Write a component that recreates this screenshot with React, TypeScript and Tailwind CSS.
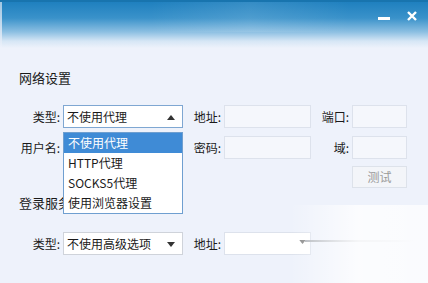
import React from "react";

const Label = ({ w, children }: { w: string; children: React.ReactNode }) => (
  <div className={`${w} shrink-0 text-right pr-[3px] text-[12px] leading-[23px] text-[#1a1a1a]`}>{children}</div>
);

const Input = ({ w }: { w: string }) => (
  <div className={`${w} h-[23px] shrink-0 border border-[#dde2ec] bg-[#f5f7fc]`} />
);

export default function App() {
  return (
    <div
      className="relative w-[428px] h-[283px] overflow-hidden bg-[#eef2fb]"
      style={{ fontFamily: '"Noto Sans CJK SC", "Noto Sans", sans-serif' }}
    >
      {/* title bar */}
      <div className="relative h-[48px] border-t-2 border-[#1874ae] bg-[linear-gradient(to_bottom,#1f80bf_0%,#3a92ca_35%,#8cbfe2_65%,#d6e6f5_85%,#eef2fb_100%)]">
        <div className="absolute left-0 top-0 h-full w-[2px] bg-gradient-to-b from-[#9fc6e2] to-[#eef2fb]" />
        <div className="absolute left-[150px] top-0 h-[30px] w-[200px] bg-gradient-to-r from-transparent via-white/10 to-transparent" />
        <div className="absolute left-[378px] top-[15px] h-[3px] w-[12px] bg-white" />
        <svg className="absolute left-[407px] top-[9px]" width="10" height="10" viewBox="0 0 10 10">
          <path d="M1 1 L9 9 M9 1 L1 9" stroke="white" strokeWidth="2.4" />
        </svg>
      </div>

      <div className="flex flex-col">
        <div className="pl-[19px] mt-[21px] text-[13px] leading-[18px] text-[#1a1a1a]">网络设置</div>

        {/* row 1 */}
        <div className="flex mt-[18px] pl-[16px]">
          <Label w="w-[47px]">类型:</Label>
          <div className="relative flex h-[23px] w-[120px] shrink-0 items-center border border-[#7fa7d2] bg-white pl-[3px] text-[12px] text-[#1a1a1a]">
            <span>不使用代理</span>
            <svg className="absolute right-[7px] top-[9px]" width="8" height="5" viewBox="0 0 8 5">
              <path d="M0 5 L4 0 L8 5 Z" fill="#333" />
            </svg>
            {/* dropdown list */}
            <div className="absolute left-[-1px] top-[26px] z-10 flex w-[120px] flex-col border border-[#6f9fd0] bg-white text-[12px] leading-[20px] text-[#1a1a1a]">
              <div className="bg-[#3f8bd6] pl-[4px] text-white">不使用代理</div>
              <div className="pl-[4px]">HTTP代理</div>
              <div className="pl-[4px]">SOCKS5代理</div>
              <div className="pl-[4px]">使用浏览器设置</div>
            </div>
          </div>
          <Label w="w-[41px]">地址:</Label>
          <Input w="w-[87px]" />
          <Label w="w-[41px]">端口:</Label>
          <Input w="w-[55px]" />
        </div>

        {/* row 2 */}
        <div className="flex mt-[8px] pl-[16px]">
          <Label w="w-[47px]">用户名:</Label>
          <Input w="w-[120px]" />
          <Label w="w-[41px]">密码:</Label>
          <Input w="w-[87px]" />
          <Label w="w-[41px]">域:</Label>
          <Input w="w-[55px]" />
        </div>

        {/* row 3 */}
        <div className="flex mt-[7px] pl-[352px]">
          <div className="flex h-[22px] w-[55px] items-center justify-center border border-[#dde2ea] bg-[#f3f5f9] text-[12px] text-[#9a9a9a]">
            测试
          </div>
        </div>

        <div className="pl-[19px] mt-[6px] text-[13px] leading-[18px] text-[#1a1a1a]">登录服务器</div>

        {/* row 4 */}
        <div className="flex mt-[20px] pl-[16px]">
          <Label w="w-[47px]">类型:</Label>
          <div className="relative flex h-[23px] w-[120px] shrink-0 items-center border border-[#cfd3da] bg-white pl-[3px] text-[12px] text-[#1a1a1a]">
            <span>不使用高级选项</span>
            <svg className="absolute right-[7px] top-[9px]" width="8" height="5" viewBox="0 0 8 5">
              <path d="M0 0 L8 0 L4 5 Z" fill="#333" />
            </svg>
          </div>
          <Label w="w-[41px]">地址:</Label>
          <div className="relative h-[23px] w-[87px] shrink-0 border border-[#dde2ec] bg-white">
            <svg className="absolute left-[74px] top-[7px]" width="7" height="4" viewBox="0 0 8 5">
              <path d="M0 0 L8 0 L4 5 Z" fill="#888" />
            </svg>
          </div>
        </div>
      </div>

      {/* faded watermark area */}
      <div className="absolute left-[305px] top-[240px] h-[2px] w-[110px] bg-gradient-to-r from-[#b0b4ba] to-transparent" />
      <div className="absolute left-[290px] top-[205px] h-[78px] w-[138px] bg-gradient-to-r from-transparent via-white/80 to-white/70" />
    </div>
  );
}
